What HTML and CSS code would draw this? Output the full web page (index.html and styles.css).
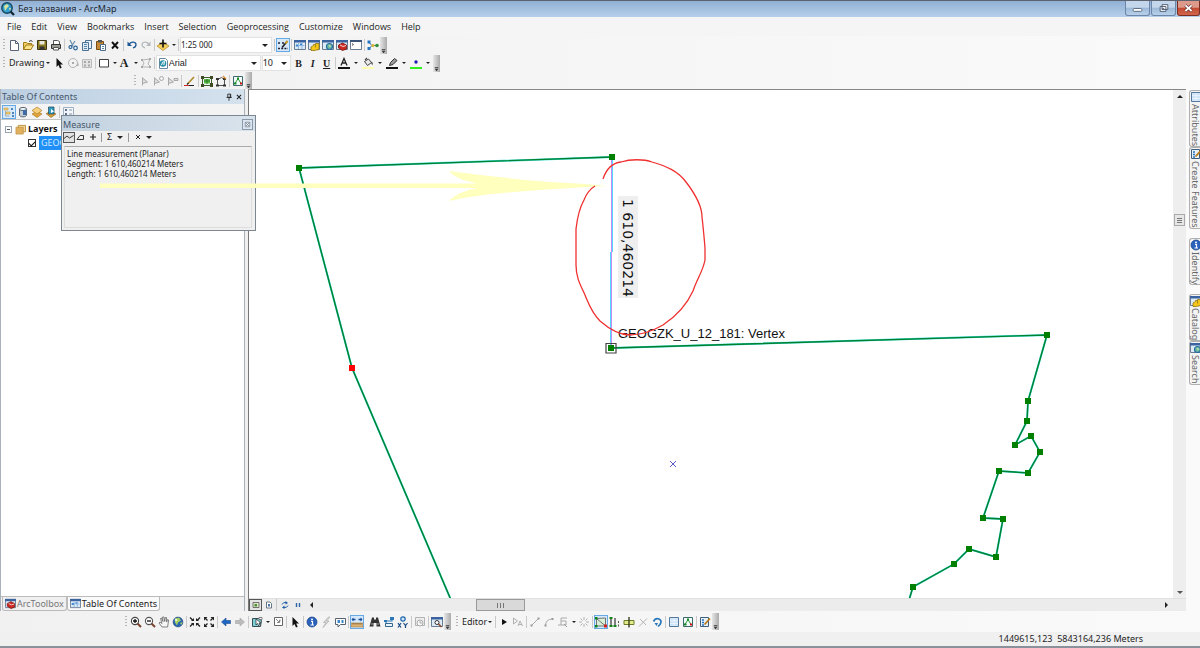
FILE: index.html
```html
<!DOCTYPE html>
<html lang="ru">
<head>
<meta charset="utf-8">
<title>Без названия - ArcMap</title>
<link rel="stylesheet" href="styles.css">
</head>
<body>
<svg class="defs" aria-hidden="true">
  <defs>
    <symbol id="app" viewBox="0 0 14 14"><circle cx="6" cy="6" r="5.2" fill="#2f9fd0" stroke="#17455e" stroke-width="1.4"/><path d="M3 4l3-2 2 2-2 2-2 3zM8 6l2 0-1 3z" fill="#d8e29a"/><path d="M9.5 9.5l3.5 3.5" stroke="#142a38" stroke-width="2.4"/></symbol>
    <symbol id="new" viewBox="0 0 12 12"><path d="M2.5 1.5h5l3 3v7h-8z" fill="#fff" stroke="#5a6577"/><path d="M7.5 1.5v3h3" fill="none" stroke="#5a6577"/></symbol>
    <symbol id="open" viewBox="0 0 12 12"><path d="M1.5 10.5v-7h3l1 1h4v2" fill="#f3cf62" stroke="#a07a16"/><path d="M1.5 10.5l2.500-4.500h7.500l-2.500 4.500z" fill="#fbe28a" stroke="#a07a16"/><path d="M7 2.500q2-2 3.500 0" fill="none" stroke="#333"/></symbol>
    <symbol id="save" viewBox="0 0 12 12"><path d="M1.500 1.500h9v9h-9z" fill="#8a7a22" stroke="#3d3512"/><path d="M3.500 2h5v3.500h-5z" fill="#e8e6d8"/><path d="M3.500 7.500h5v3h-5z" fill="#333"/></symbol>
    <symbol id="print" viewBox="0 0 12 12"><path d="M3.500 1.500h4l2 1v3h-6z" fill="#fff" stroke="#555"/><path d="M1.500 5.500h9v4h-9z" fill="#9a9a92" stroke="#333"/><path d="M3.500 8.500h5v2.500h-5z" fill="#fff" stroke="#555"/></symbol>
    <symbol id="cut" viewBox="0 0 12 12"><path d="M3 1l3 6M8 2l-4 6" stroke="#6f93ae" stroke-width="1.300"/><circle cx="3.500" cy="8" r="1.500" fill="none" stroke="#28639b" stroke-width="1.200"/><circle cx="8.500" cy="9" r="1.800" fill="none" stroke="#28639b" stroke-width="1.200"/></symbol>
    <symbol id="copy" viewBox="0 0 12 12"><path d="M4.500 1.500h6v8h-6z" fill="#eaf3fa" stroke="#4a7093"/><path d="M1.500 3.500h6v8h-6z" fill="#dcebf6" stroke="#4a7093"/><path d="M3 5.500h3M3 7.500h3M3 9.500h3" stroke="#5c86a8"/></symbol>
    <symbol id="paste" viewBox="0 0 12 12"><path d="M1.500 2.500h7v8h-7z" fill="#c58a35" stroke="#7a4b12"/><path d="M3 1h4v2.500h-4z" fill="#555"/><path d="M5.500 5.500h5v6h-5z" fill="#fff" stroke="#4b6c90"/><path d="M7 7.500h2M7 9.500h2" stroke="#5c86a8"/></symbol>
    <symbol id="del" viewBox="0 0 12 12"><path d="M3 3l6 6.500M9 3l-6 6.500" stroke="#111" stroke-width="1.900"/></symbol>
    <symbol id="undo" viewBox="0 0 12 12"><path d="M3 5c3-3 7-2 7 .8 0 1.600-1 2.600-3 3" fill="none" stroke="#1d5796" stroke-width="1.300"/><path d="M1.500 2.500v4.500h4.500z" fill="#1d5796"/></symbol>
    <symbol id="redo" viewBox="0 0 12 12"><path d="M9 5c-3-3-7-2-7 .8 0 1.600 1 2.600 3 3" fill="none" stroke="#b4b8bc" stroke-width="1.200"/><path d="M10.500 2.500v4.500h-4.500z" fill="#b4b8bc"/></symbol>
    <symbol id="add" viewBox="0 0 12 12"><path d="M6 3l6 4-6 4.500-6-4.500z" fill="#f5cf5c" stroke="#b3871c" stroke-width=".7"/><path d="M6 .500v8M2.500 4.500h7" stroke="#111" stroke-width="1.600"/></symbol>
    <symbol id="edtb" viewBox="0 0 12 12"><path d="M1 4h2M5 4h2M1 9.500h10" stroke="#223" stroke-width="1.300" stroke-dasharray="2 1.200"/><path d="M5 8.500l5.500-6.500" stroke="#222" stroke-width="1.700"/><path d="M8.500 4.500l2-2.500" stroke="#d9a520" stroke-width="1.700"/></symbol>
    <symbol id="win" viewBox="0 0 12 12"><path d="M.5 1.500h11v9h-11z" fill="#dceaf6" stroke="#6a7c92"/><path d="M0 1h12v2.500h-12z" fill="#3a63a0"/></symbol>
    <symbol id="toc" viewBox="0 0 12 12"><use href="#win"/><path d="M1.500 6.500h9M4.500 4v6M8 4v6" stroke="#8cb8e4"/><path d="M2 5.500h2v2h-2zM6 4.500h2v1.500h-2z" fill="#3c82cc"/></symbol>
    <symbol id="cat" viewBox="0 0 12 12"><use href="#win"/><path d="M3 8l2.500-1.500v-1h2v-1h3.500v6l-5 1h-3z" fill="#f3c81b" stroke="#94750c" stroke-width=".8"/><path d="M7.500 5.500v3" stroke="#94750c" stroke-width=".8"/></symbol>
    <symbol id="srch" viewBox="0 0 12 12"><use href="#win"/><circle cx="7.500" cy="7.500" r="3" fill="#6fb9a0" stroke="#276ea3" stroke-width="1.200"/><path d="M6.500 7l1.500-1 1 2z" fill="#e9f3b0"/></symbol>
    <symbol id="tbx" viewBox="0 0 12 12"><use href="#win"/><path d="M2.500 6l4-2 4 2v4l-4 1.500-4-2.500z" fill="#cb2a22" stroke="#7b120d" stroke-width=".8"/><path d="M4 6l3 1.500 3-1" fill="none" stroke="#fff" stroke-width=".8"/></symbol>
    <symbol id="py" viewBox="0 0 12 12"><path d="M.5 1.500h11v9h-11z" fill="#fff" stroke="#6a7c92"/><path d="M0 1h12v2h-12z" fill="#3d5479"/><path d="M2 4.500l1.500 1-1.500 1" fill="none" stroke="#333" stroke-width=".8"/></symbol>
    <symbol id="model" viewBox="0 0 12 12"><path d="M2 3.500l3 3-3 3M5 6.500h6" fill="none" stroke="#276ea3"/><path d="M.500 1.500h3v3h-3zM.500 8h3v3h-3z" fill="#2675c0"/><circle cx="6" cy="6.500" r="1.600" fill="#d9b52b"/><circle cx="10" cy="6.500" r="1.800" fill="#36913e"/></symbol>
    <symbol id="ptr" viewBox="0 0 12 12"><path d="M3.500 1v9l2-2 1.500 3.500 1.700-.8-1.500-3.200h2.800z" fill="#111"/></symbol>
    <symbol id="rot" viewBox="0 0 12 12"><circle cx="6" cy="6" r="4.500" fill="none" stroke="#b5b5b5"/><path d="M5 5h2v2h-2zM9 9l2.500 0v-3z" fill="#aaa"/></symbol>
    <symbol id="zsel" viewBox="0 0 12 12"><path d="M1.500 2.500h9v8h-9z" fill="#e3e3e3" stroke="#bbb"/><path d="M3 4h2v2h-2zM7 4h2v2h-2zM3 7.500h2v2h-2zM7 7.500h2v2h-2z" fill="#a8a8a8"/></symbol>
    <symbol id="rect" viewBox="0 0 12 12"><path d="M1.500 2.500h9v7.500h-9z" fill="#fff" stroke="#3f3f3f"/></symbol>
    <symbol id="verts" viewBox="0 0 12 12"><path d="M2 10l2-4-2-3 8-1-2 5 3 3z" fill="none" stroke="#b4b4b4"/><path d="M1 2h2v2h-2zM9 1h2v2h-2zM1 9h2v2h-2zM9 9h2v2h-2z" fill="#aaa"/></symbol>
    <symbol id="ttf" viewBox="0 0 12 12"><path d="M2.500 1.500h6l2 2v8h-8z" fill="#fff" stroke="#6a87a0"/><circle cx="6" cy="6.500" r="3.300" fill="#2c91a8"/><path d="M4.500 8q1-4 3-3.500l-.7 3.500" stroke="#fff" fill="none"/></symbol>
    <symbol id="fcol" viewBox="0 0 12 12"><path d="M3 8.500l3-7 3 7M4 6h4" fill="none" stroke="#222" stroke-width="1.300"/><path d="M0 10h12v2h-12z" fill="#111"/></symbol>
    <symbol id="fill" viewBox="0 0 12 12"><path d="M2.500 4.500l4-2.500 3 3.500-4 3z" fill="#e8e8e8" stroke="#444"/><path d="M3 3l2-2M9.500 5l1 2.500" stroke="#444" stroke-width="1.200"/><path d="M0 10h12v2h-12z" fill="#ffffb0"/></symbol>
    <symbol id="brush" viewBox="0 0 12 12"><path d="M3.500 8.500l1-3 4-4 2.500 2-4 4z" fill="#999" stroke="#333"/><path d="M0 10h12v2h-12z" fill="#111"/></symbol>
    <symbol id="dot" viewBox="0 0 12 12"><circle cx="6" cy="5" r="1.700" fill="#1d1dae"/><path d="M0 10h12v2h-12z" fill="#30f020"/></symbol>
    <symbol id="t1" viewBox="0 0 12 12"><path d="M3.500 2.500v8M3.500 3l5 4-5 1.500" fill="#ddd" stroke="#a9a9a9"/></symbol>
    <symbol id="t2" viewBox="0 0 12 12"><path d="M1.500 2.500v8M1.500 3l5 4-5 1.500" fill="#ddd" stroke="#a9a9a9"/><circle cx="8.500" cy="3.500" r="2" fill="none" stroke="#a9a9a9"/></symbol>
    <symbol id="t3" viewBox="0 0 12 12"><path d="M1.500 2.500v8M1.500 3l5 4-5 1.500M7 3.500h4v2h-4z" fill="#ddd" stroke="#a9a9a9"/></symbol>
    <symbol id="pen" viewBox="0 0 12 12"><path d="M4 8.500l6-6.500" stroke="#b08a25" stroke-width="1.600"/><path d="M3 9.500l1.500-1.500" stroke="#222" stroke-width="1.300"/><path d="M0 10.500h5" stroke="#c22"/><path d="M5 10.500h5" stroke="#222"/></symbol>
    <symbol id="g1" viewBox="0 0 12 12"><path d="M1.500 2.500h9v8h-9z" fill="none" stroke="#3b5e2c"/><path d="M3 4h6v4.500h-6z" fill="#5cc34a"/><path d="M0 1h3v3h-3zM9 1h3v3h-3zM0 9h3v3h-3zM9 8h3v4h-3z" fill="#3d4a22"/><path d="M6 4v5M3 6h6" stroke="#2f7a28"/></symbol>
    <symbol id="g2" viewBox="0 0 12 12"><path d="M2.500 10.500v-6l4-2 3 2v6z" fill="none" stroke="#555"/><path d="M1 3h3v2h-3zM8 3h3v2h-3zM1 9.500h3v2h-3zM8 9.500h3v2h-3z" fill="#333"/><path d="M8 1l3 3" stroke="#dc8b24" stroke-width="1.300"/></symbol>
    <symbol id="topo" viewBox="0 0 12 12"><path d="M1.500 1.500h9v9h-9z" fill="#f4fbfb" stroke="#3c6870"/><path d="M3 8.500l3-5 3 5" fill="none" stroke="#2b9b3b"/><path d="M5 2.500h2v2h-2z" fill="#148a22"/><path d="M2 7.500h2.500v2h-2.500z" fill="#148a22"/><path d="M8 7.500h2v2h-2z" fill="#d11"/></symbol>
    <symbol id="zin" viewBox="0 0 12 12"><circle cx="5" cy="5" r="3.600" fill="#fff" stroke="#444" stroke-width="1.100"/><path d="M3 5h4M5 3v4" stroke="#111" stroke-width="1.300"/><path d="M7.500 7.500l3.500 3.500" stroke="#7a4530" stroke-width="2"/></symbol>
    <symbol id="zout" viewBox="0 0 12 12"><circle cx="5" cy="5" r="3.600" fill="#fff" stroke="#555" stroke-width="1.100"/><path d="M3 5h4" stroke="#111" stroke-width="1.300"/><path d="M7.500 7.500l3.500 3.500" stroke="#7a4530" stroke-width="2"/></symbol>
    <symbol id="hand" viewBox="0 0 12 12"><path d="M4 11l-3-4 1-1 2 1.500-1.500-5 1-.5 1.500 3.500-.5-4.500h1.500l.7 4.500.6-4h1.200l.1 4.500 1-2.500 1 .5-1 7z" fill="#f6f6f6" stroke="#666" stroke-width=".8"/></symbol>
    <symbol id="globe" viewBox="0 0 12 12"><circle cx="6" cy="6" r="4.900" fill="#2b66b5" stroke="#1b4377" stroke-width=".6"/><path d="M3 2.500l4-1 2 3-3 2-1 3-2-3z" fill="#a2d060"/><path d="M8 7l2.500-1-1 3z" fill="#a2d060"/><circle cx="4" cy="4" r="1.300" fill="#e7f6c6"/></symbol>
    <symbol id="zfin" viewBox="0 0 12 12"><path d="M1 1.500l3 3M11 1.500l-3 3M1 10.500l3-3M11 10.500l-3-3" stroke="#222" stroke-width="1.300"/><path d="M2 5h3v-3zM10 5h-3v-3zM2 7h3v3zM10 7h-3v3z" fill="#222"/></symbol>
    <symbol id="zfout" viewBox="0 0 12 12"><path d="M2 2l2.500 2.500M10 2l-2.500 2.500M2 10l2.500-2.500M10 10l-2.500-2.500" stroke="#222" stroke-width="1.300"/><path d="M1 1h3.500l-3.500 3.500zM11 1h-3.500l3.500 3.500zM1 11h3.500l-3.500-3.500zM11 11h-3.500l3.500-3.500z" fill="#222"/></symbol>
    <symbol id="back" viewBox="0 0 12 12"><path d="M1.500 6l4.500-4v2.500h4.500v3h-4.500v2.500z" fill="#1f66c2" stroke="#164b91" stroke-width=".6"/></symbol>
    <symbol id="fwd" viewBox="0 0 12 12"><path d="M10.500 6l-4.500-4v2.500h-4.500v3h4.500v2.500z" fill="#bcbcbc" stroke="#a5a5a5" stroke-width=".6"/></symbol>
    <symbol id="sel" viewBox="0 0 12 12"><path d="M1.500 2.500h6l3 2-1 6h-8z" fill="#7fd0d8" stroke="#3a4d55"/><path d="M8 1.500h3v2h-3z" fill="#fff" stroke="#555" stroke-width=".7"/><path d="M5 3v6l1.500-1.500 1.500 3 1-1-1-2.500h2z" fill="#fff" stroke="#222" stroke-width=".7"/></symbol>
    <symbol id="clr" viewBox="0 0 12 12"><path d="M2.500 1.500h8v8h-8z" fill="#fff" stroke="#666"/><path d="M4 3l3.500 3.500M7.500 4v2.500h-2.500M8 3.500v2" fill="none" stroke="#888"/></symbol>
    <symbol id="info" viewBox="0 0 12 12"><circle cx="6" cy="6" r="5" fill="#2a62bd" stroke="#163f83" stroke-width=".7"/><circle cx="6" cy="3.500" r="1" fill="#fff"/><path d="M5 5.500h1.500v3.500M4.500 9h3.500" stroke="#fff" stroke-width="1.200" fill="none"/></symbol>
    <symbol id="bolt" viewBox="0 0 12 12"><path d="M8.500 1l-5 5.500h2.500l-3 5 6-6.500h-2.500l3.500-4z" fill="#ddd" stroke="#aaa" stroke-width=".7"/></symbol>
    <symbol id="html" viewBox="0 0 12 12"><path d="M1.500 2.500h10v6h-5l-2.500 2.500v-2.500h-2.500z" fill="#fff" stroke="#56626e"/><path d="M3.500 4h2.500v3h-2.500zM7.500 4h2v3h-2z" fill="#3a86c8"/></symbol>
    <symbol id="ruler" viewBox="0 0 12 12"><path d="M0 7h12v4h-12z" fill="#dcb377" stroke="#a57c3c" stroke-width=".6"/><path d="M2 7v1.500M4 7v1.500M6 7v1.500M8 7v1.500M10 7v1.500" stroke="#5f4317" stroke-width=".7"/><path d="M1 3.500h3.500M7.500 3.500h3.500" stroke="#1b4c9c" stroke-width="1.300"/><path d="M2.500 1.500v4l-2-2zM9.500 1.500v4l2-2z" fill="#1b4c9c"/></symbol>
    <symbol id="bino" viewBox="0 0 12 12"><path d="M3 1.500h2v2h2v-2h2l2.500 9h-4v-3.500h-3v3.500h-4z" fill="#333"/><path d="M2 8h2M8 8h2" stroke="#aaa"/></symbol>
    <symbol id="route" viewBox="0 0 12 12"><path d="M3 8v-3h6v-2" fill="none" stroke="#2b78b8" stroke-width="1.100"/><path d="M2.500 7.500h7v3h-7z" fill="#eaf4fb" stroke="#31688f"/><path d="M7 1h4v3h-4zM1 4h3v2h-3z" fill="#2b78b8"/></symbol>
    <symbol id="xy" viewBox="0 0 12 12"><circle cx="6" cy="3" r="2.200" fill="#cfe7f8" stroke="#1d64a8" stroke-width="1.200"/><path d="M1 7l3 4.500M4 7l-3 4.500M6.500 7l2 2.500 2-2.500M8.500 9.500v2.500" fill="none" stroke="#174c86" stroke-width="1.200"/></symbol>
    <symbol id="time" viewBox="0 0 12 12"><path d="M1.500 1.500h9v8h-9z" fill="#eee" stroke="#b3b3b3"/><circle cx="6" cy="7" r="3" fill="#f8f8f8" stroke="#aaa"/><path d="M6 5v2h2" fill="none" stroke="#aaa"/></symbol>
    <symbol id="view" viewBox="0 0 12 12"><use href="#win"/><circle cx="6" cy="6.500" r="2" fill="#fff" stroke="#333"/><path d="M7.500 8l3 3" stroke="#8a4a30" stroke-width="1.600"/></symbol>
    <symbol id="play" viewBox="0 0 12 12"><path d="M4 3v6l5-3z" fill="#111"/></symbol>
    <symbol id="ea" viewBox="0 0 12 12"><path d="M1.500 2v6l4-3zM6 10l2-5 2.500 5M7 8.500h3" fill="none" stroke="#b0b0b0"/></symbol>
    <symbol id="line" viewBox="0 0 12 12"><path d="M2.500 9.500l7-7" stroke="#aaa"/><path d="M1.500 8.500h2v2h-2zM8.500 1.500h2v2h-2z" fill="#999"/></symbol>
    <symbol id="arc" viewBox="0 0 12 12"><path d="M2.500 10q0-7 7-7" stroke="#aaa" fill="none"/><path d="M1.500 8.500h2v2h-2zM8.500 2h2v2h-2z" fill="#999"/></symbol>
    <symbol id="trace" viewBox="0 0 12 12"><path d="M4 2h6M4 2v7M1 9h8v-4h-5" stroke="#aaa" fill="none"/><path d="M7 8l3 3" stroke="#999"/></symbol>
    <symbol id="burst" viewBox="0 0 12 12"><path d="M6 1v3M6 8v3M1 6h3M8 6h3M2.500 2.500l2 2M7.500 7.500l2 2M9.500 2.500l-2 2M4.500 7.500l-2 2" stroke="#b2b2b2"/></symbol>
    <symbol id="ev" viewBox="0 0 12 12"><path d="M1.500 2v8h9l-9-7.500 9-.500v8" fill="#d8f0d8" stroke="#555" stroke-width=".8"/><path d="M0 1h2.500v2.500h-2.500zM0 9h2.500v2.500h-2.500z" fill="#12851c"/><path d="M9 8.500h3v3h-3z" fill="#c22"/></symbol>
    <symbol id="resh" viewBox="0 0 12 12"><path d="M2 2v8M6 2v8" stroke="#333" stroke-width="1.200"/><path d="M.500 1h3v2h-3zM.500 9h3v2h-3zM4.500 9h3v2h-3z" fill="#12851c"/><path d="M9.500 5v2M9.500 8.500v2" fill="none" stroke="#555"/></symbol>
    <symbol id="cutp" viewBox="0 0 12 12"><path d="M1 4.500h10v4h-10z" fill="#e4eb8c" stroke="#6b7d2a"/><path d="M6 1v10.500" stroke="#3a3f1c" stroke-width="1.400"/></symbol>
    <symbol id="split" viewBox="0 0 12 12"><path d="M2 10.500l8-8M3 3l6 6" stroke="#b5b5b5"/></symbol>
    <symbol id="rotb" viewBox="0 0 12 12"><path d="M2.500 5.500q2-4 5.500-2.500t1 5.500l-2 2" fill="none" stroke="#2677ba" stroke-width="1.700"/><path d="M3.500 7l3.500 0-1.500 3z" fill="#2677ba"/></symbol>
    <symbol id="attr" viewBox="0 0 12 12"><path d="M1.500 1.500h9v9h-9z" fill="#cfe5f8" stroke="#54799c"/><path d="M2 4.500h8M2 7.500h8M6 2v8" stroke="#f2f8fd" stroke-width=".7"/></symbol>
    <symbol id="crf" viewBox="0 0 12 12"><path d="M1.500 1.500h8v9h-8z" fill="#e9f1f8" stroke="#405f7c"/><path d="M3 4h2M3 6.500h2M3 9h2" stroke="#2675c0" stroke-width="1.500"/><path d="M5.500 8.500l5.500-6" stroke="#b87b1a" stroke-width="1.800"/></symbol>
    <symbol id="l1" viewBox="0 0 12 12"><path d="M1 2h4v2h-4zM3 6h4v2h-4z" fill="#f3cd78" stroke="#c99a3b" stroke-width=".6"/><path d="M8 3h2M9 7h2M9 10h2" stroke="#2766a5" stroke-width="1.500"/><path d="M2.500 5v5h4" stroke="#9a9a9a" fill="none" stroke-width=".7"/></symbol>
    <symbol id="l2" viewBox="0 0 12 12"><path d="M2.500 3v6c0 2.500 7 2.500 7 0v-6z" fill="#c5ccd4" stroke="#5b6875"/><ellipse cx="6" cy="3" rx="3.500" ry="1.600" fill="#eef2f6" stroke="#5b6875"/><path d="M6 4h3.500v5h-3.500z" fill="#3e6da7"/></symbol>
    <symbol id="l3" viewBox="0 0 12 12"><path d="M6 5l5 3-5 3.500-5-3.500z" fill="#e0a53a" stroke="#a6741b" stroke-width=".6"/><path d="M6 1l5 3.500-5 3.500-5-3.500z" fill="#f6cf7c" stroke="#a6741b" stroke-width=".6"/></symbol>
    <symbol id="l4" viewBox="0 0 12 12"><path d="M1 7.500l5-2 5 2.500-5 3.500z" fill="#d9a03d" stroke="#8c6214" stroke-width=".6"/><path d="M3.500 1h5.500v7h-5.500z" fill="#2f9cc0" stroke="#245" stroke-width=".7"/><path d="M6 3v4l3-1.500z" fill="#fff"/></symbol>
    <symbol id="l5" viewBox="0 0 12 12"><path d="M1.500 1.500h10v9h-10z" fill="#f2f5f9" stroke="#9fb0c4"/><path d="M3 4h2M3 8h2" stroke="#2b446d" stroke-width="1.600"/><path d="M7 4h3M7 8h3" stroke="#8799ad"/></symbol>
    <symbol id="layers" viewBox="0 0 12 12"><path d="M3.500 1.500h8v7h-8z" fill="#f3d798" stroke="#b98f40"/><path d="M1 3.500h8v7.500h-8z" fill="#e0b05e" stroke="#b98f40" stroke-width=".7"/></symbol>
    <symbol id="mline" viewBox="0 0 12 12"><path d="M1 7.500l3-2.500 2.500 2 4-2.500" fill="none" stroke="#222" stroke-width=".9"/></symbol>
    <symbol id="marea" viewBox="0 0 12 12"><path d="M2 8.500l3-4h3.500v4z" fill="none" stroke="#222" stroke-width=".9"/></symbol>
    <symbol id="mfeat" viewBox="0 0 12 12"><path d="M6 3v6M3 6h6" stroke="#222" stroke-width="1.200"/></symbol>
    <symbol id="mclr" viewBox="0 0 12 12"><path d="M4 4l4 4M8 4l-4 4" stroke="#222"/></symbol>
    <symbol id="pin" viewBox="0 0 12 12"><path d="M4.500 2.500h3.500v4h-3.500zM3 6.500h6.500M6 6.500v4M7.500 2.500v4" fill="none" stroke="#222"/></symbol>
    <symbol id="x" viewBox="0 0 12 12"><path d="M3.500 3.500l5 5M8.500 3.500l-5 5" stroke="#222" stroke-width="1.300"/></symbol>
    <symbol id="mx" viewBox="0 0 12 12"><path d="M3 3h6v6h-6z" fill="#eef3f8" stroke="#6f7d8c"/><path d="M4 4l4 4M8 4l-4 4" stroke="#6f7d8c"/></symbol>
    <symbol id="dv" viewBox="0 0 12 12"><path d="M3 3.500h6v5h-6z" fill="#dfe8c5" stroke="#555" stroke-width=".8"/><path d="M4.500 5h2.500v2.500h-2.500z" fill="#4d8a3a"/></symbol>
    <symbol id="lv" viewBox="0 0 12 12"><path d="M3.500 3h3.500l1.500 1.500v4.500h-5z" fill="#fff" stroke="#456" stroke-width=".8"/><path d="M5 5h2v2.500h-2z" fill="#4a78a8"/></symbol>
    <symbol id="ref" viewBox="0 0 12 12"><path d="M3 5.500q1-2.500 4-2M9 6.500q-1 2.500-4 2" fill="none" stroke="#1f5da5"/><path d="M6.500 2v3.500l2.500-1.500zM5.500 6.500v3.500l-2.500-1.500z" fill="#1f5da5"/></symbol>
    <symbol id="pause" viewBox="0 0 12 12"><path d="M4.500 4v4M7.500 4v4" stroke="#2f66a8" stroke-width="1.400"/></symbol>
    <symbol id="over" viewBox="0 0 8 12"><path d="M2 7.500h4" stroke="#111"/><path d="M2 9h4l-2 2z" fill="#111"/></symbol>
  </defs>
</svg>

<header class="titlebar">
  <svg class="appicon"><use href="#app"/></svg>
  <h1>Без названия - ArcMap</h1>
  <div class="winbtns">
    <button aria-label="Minimize"><svg viewBox="0 0 24 14"><rect x="7.500" y="7.500" width="9" height="3" rx="1" fill="#fff" stroke="#5a6a80"/></svg></button>
    <button aria-label="Restore"><svg viewBox="0 0 24 14"><path d="M10.500 3.500h6v5h-6zM8.500 5.500h6v5h-6z" fill="#fff" stroke="#4c5c72"/><path d="M10.500 7.500h2v1h-2z" fill="#8ea6c2" stroke="#4c5c72" stroke-width=".7"/></svg></button>
    <button class="close" aria-label="Close"><svg viewBox="0 0 24 14"><path d="M8.500 4l7 6.500M15.500 4l-7 6.500" stroke="#4d1c1c" stroke-width="3.400"/><path d="M8.500 4l7 6.500M15.500 4l-7 6.500" stroke="#fff" stroke-width="2.200"/></svg></button>
  </div>
</header>

<nav class="menubar">
  <button>File</button><button>Edit</button><button>View</button><button>Bookmarks</button><button>Insert</button><button>Selection</button><button>Geoprocessing</button><button>Customize</button><button>Windows</button><button>Help</button>
</nav>

<div class="bars">
  <div class="bar">
    <i class="grip"></i>
    <button aria-label="New"><svg><use href="#new"/></svg></button>
    <button aria-label="Open"><svg><use href="#open"/></svg></button>
    <button aria-label="Save"><svg><use href="#save"/></svg></button>
    <button aria-label="Print"><svg><use href="#print"/></svg></button>
    <i class="sep"></i>
    <button aria-label="Cut"><svg><use href="#cut"/></svg></button>
    <button aria-label="Copy"><svg><use href="#copy"/></svg></button>
    <button aria-label="Paste"><svg><use href="#paste"/></svg></button>
    <button aria-label="Delete"><svg><use href="#del"/></svg></button>
    <i class="sep"></i>
    <button aria-label="Undo"><svg><use href="#undo"/></svg></button>
    <button aria-label="Redo"><svg><use href="#redo"/></svg></button>
    <i class="sep"></i>
    <button class="drop" aria-label="Add data"><svg><use href="#add"/></svg></button>
    <i class="sep"></i>
    <span class="combo scale"><select aria-label="Map scale"><option>1:25 000</option></select></span>
    <i class="sep"></i>
    <button class="on" aria-label="Editor toolbar"><svg><use href="#edtb"/></svg></button>
    <i class="sep"></i>
    <button aria-label="Contents window"><svg><use href="#toc"/></svg></button>
    <button aria-label="Catalog window"><svg><use href="#cat"/></svg></button>
    <button aria-label="Search window"><svg><use href="#srch"/></svg></button>
    <button aria-label="Toolbox window"><svg><use href="#tbx"/></svg></button>
    <button aria-label="Python window"><svg><use href="#py"/></svg></button>
    <i class="sep"></i>
    <button aria-label="ModelBuilder"><svg><use href="#model"/></svg></button>
    <button class="more" aria-label="Toolbar options"><svg><use href="#over"/></svg></button>
  </div>
  <div class="bar">
    <i class="grip"></i>
    <button class="word">Drawing</button>
    <button aria-label="Select elements"><svg><use href="#ptr"/></svg></button>
    <button aria-label="Rotate"><svg><use href="#rot"/></svg></button>
    <button aria-label="Zoom to elements"><svg><use href="#zsel"/></svg></button>
    <i class="sep"></i>
    <button class="drop" aria-label="Rectangle"><svg><use href="#rect"/></svg></button>
    <button class="drop glyph">A</button>
    <button aria-label="Edit vertices"><svg><use href="#verts"/></svg></button>
    <i class="sep"></i>
    <span class="combo font"><svg><use href="#ttf"/></svg><select aria-label="Font"><option>Arial</option></select></span>
    <span class="combo size"><select aria-label="Font size"><option>10</option></select></span>
    <button class="glyph">B</button>
    <button class="glyph italic">I</button>
    <button class="glyph under">U</button>
    <i class="sep"></i>
    <button class="drop wide" aria-label="Font color"><svg><use href="#fcol"/></svg></button>
    <button class="drop wide" aria-label="Fill color"><svg><use href="#fill"/></svg></button>
    <button class="drop wide" aria-label="Line color"><svg><use href="#brush"/></svg></button>
    <button class="drop wide" aria-label="Marker color"><svg><use href="#dot"/></svg></button>
    <button class="more" aria-label="Toolbar options"><svg><use href="#over"/></svg></button>
  </div>
  <div class="bar inset">
    <i class="grip"></i>
    <button aria-label="Topology edit"><svg><use href="#t1"/></svg></button>
    <button aria-label="Topology select"><svg><use href="#t2"/></svg></button>
    <button aria-label="Topology modify"><svg><use href="#t3"/></svg></button>
    <i class="sep"></i>
    <button aria-label="Sketch"><svg><use href="#pen"/></svg></button>
    <i class="sep"></i>
    <button aria-label="Validate extent"><svg><use href="#g1"/></svg></button>
    <button aria-label="Fix errors"><svg><use href="#g2"/></svg></button>
    <i class="sep"></i>
    <button aria-label="Error inspector"><svg><use href="#topo"/></svg></button>
    <button class="more" aria-label="Toolbar options"><svg><use href="#over"/></svg></button>
  </div>
</div>

<main class="work">
  <aside class="contents">
    <div class="panelhead"><h2>Table Of Contents</h2>
      <button aria-label="Auto hide"><svg><use href="#pin"/></svg></button>
      <button aria-label="Close panel"><svg><use href="#x"/></svg></button>
    </div>
    <div class="paneltools">
      <button class="on" aria-label="List by drawing order"><svg><use href="#l1"/></svg></button>
      <button aria-label="List by source"><svg><use href="#l2"/></svg></button>
      <button aria-label="List by visibility"><svg><use href="#l3"/></svg></button>
      <button aria-label="List by selection"><svg><use href="#l4"/></svg></button>
      <i class="sep"></i>
      <button aria-label="Options"><svg><use href="#l5"/></svg></button>
    </div>
    <div class="tree">
      <div class="node root"><button class="twisty" aria-label="Collapse"></button><svg><use href="#layers"/></svg><b>Layers</b></div>
      <div class="node leaf"><input type="checkbox" id="lyr" checked><label for="lyr">GEOG</label></div>
    </div>
    <div class="tabs">
      <button><svg><use href="#tbx"/></svg>ArcToolbox</button>
      <button class="cur"><svg><use href="#toc"/></svg>Table Of Contents</button>
    </div>
  </aside>

  <section class="mapview">
    <div class="maprow">
      <svg class="map" role="img" aria-label="Map">
        <defs>
          <marker id="v" markerWidth="6" markerHeight="6" refX="3" refY="3" markerUnits="userSpaceOnUse"><rect width="6" height="6" fill="#008000"/></marker>
        </defs>
        <g transform="translate(-249 -90)" fill="none">
          <path d="M612 157L299 168L352 368L451 600M611 348L1047 335L1028 401L1027 421L1015 445L1031 436L1040 452L1028 473L999 471L983 518L1003 519L996 557L969 549L954 564L913 587L909 600" stroke="#3fe0dc" stroke-width="2"/>
          <path d="M612 157L299 168L352 368L451 600" stroke="#008030" stroke-width="1.400"/>
          <path d="M611 348L1047 335L1028 401L1027 421L1015 445L1031 436L1040 452L1028 473L999 471L983 518L1003 519L996 557L969 549L954 564L913 587L909 600" stroke="#008030" stroke-width="1.400" marker-mid="url(#v)"/>
          <path d="M612.500 157v95M610.500 252v96" stroke="#52d8ff" stroke-width="1"/>
          <path d="M611.500 157v191" stroke="#c58cf5"/>
          <path d="M296 165h6v6h-6zM609 154h6v6h-6zM608 345h6v6h-6z" fill="#008000"/>
          <path d="M349 365h6v6h-6z" fill="#f00"/>
          <path d="M606 343.500h10v9.500h-10z" stroke="#444" stroke-width="1.200"/>
          <path d="M670 461l6 6M676 461l-6 6" stroke="#5a5ac8"/>
          <rect x="618" y="196" width="20" height="102" fill="#efefef"/>
          <text class="dist" transform="translate(623 199) rotate(90)">1 610,460214</text>
          <text class="tip" x="618" y="338">GEOGZK_U_12_181: Vertex</text>
        </g>
      </svg>
      <div class="vscroll"><i class="up"></i><i class="thumb"></i><i class="down"></i></div>
    </div>
    <div class="hscroll">
      <button class="on" aria-label="Data view"><svg><use href="#dv"/></svg></button>
      <button aria-label="Layout view"><svg><use href="#lv"/></svg></button>
      <i class="sep"></i>
      <button aria-label="Refresh"><svg><use href="#ref"/></svg></button>
      <button aria-label="Pause drawing"><svg><use href="#pause"/></svg></button>
      <i class="left"></i><span class="track before"></span><i class="thumb"></i><span class="track"></span><i class="right"></i>
    </div>
  </section>

  <nav class="dock">
    <button><svg><use href="#attr"/></svg>Attributes</button>
    <button class="gap"><svg><use href="#crf"/></svg>Create Features</button>
    <button class="gap"><svg><use href="#info"/></svg>Identify</button>
    <button><svg><use href="#cat"/></svg>Catalog</button>
    <button><svg><use href="#srch"/></svg>Search</button>
  </nav>

  <section class="measure" aria-label="Measure">
    <header><h2>Measure</h2><button aria-label="Close measure"><svg><use href="#mx"/></svg></button></header>
    <div class="mtools">
      <button class="on" aria-label="Measure line"><svg><use href="#mline"/></svg></button>
      <button aria-label="Measure area"><svg><use href="#marea"/></svg></button>
      <button aria-label="Measure feature"><svg><use href="#mfeat"/></svg></button>
      <i class="sep"></i>
      <button class="drop glyph">Σ</button>
      <i class="sep"></i>
      <button class="drop" aria-label="Units"><svg><use href="#mclr"/></svg></button>
    </div>
    <div class="result"><p>Line measurement (Planar)</p><p>Segment: 1 610,460214 Meters</p><p>Length: 1 610,460214 Meters</p></div>
  </section>

  <svg class="notes" aria-hidden="true">
    <g transform="translate(0 -89)">
      <path d="M100 183.500H477Q455 179 449 171Q500 178 550 182Q590 184 606 186Q570 188 540 190Q480 194 449 201Q457 192 477 188H100z" fill="#ffffbe"/>
      <path d="M603 179C606 170 612 163 621 162C630 159 644 159 652 162C666 166 678 171 686 182C696 195 702 207 702 217C703 226 704 235 705 248V260C703 271 697 279 693 291C688 302 678 315 663 325C650 332 643 334 630 335C618 335 608 328 600 321C591 312 588 302 585 295C581 286 576 278 576 265V229C577 220 579 209 584 200C587 192 590 189 595 186" fill="none" stroke="#f03030" stroke-width="1.300"/>
    </g>
  </svg>
</main>

<div class="bar foot">
  <i class="grip"></i>
  <button aria-label="Zoom in"><svg><use href="#zin"/></svg></button>
  <button aria-label="Zoom out"><svg><use href="#zout"/></svg></button>
  <button aria-label="Pan"><svg><use href="#hand"/></svg></button>
  <button aria-label="Full extent"><svg><use href="#globe"/></svg></button>
  <i class="sep"></i>
  <button aria-label="Fixed zoom in"><svg><use href="#zfin"/></svg></button>
  <button aria-label="Fixed zoom out"><svg><use href="#zfout"/></svg></button>
  <i class="sep"></i>
  <button aria-label="Previous extent"><svg><use href="#back"/></svg></button>
  <button aria-label="Next extent"><svg><use href="#fwd"/></svg></button>
  <i class="sep"></i>
  <button class="drop" aria-label="Select features"><svg><use href="#sel"/></svg></button>
  <button aria-label="Clear selection"><svg><use href="#clr"/></svg></button>
  <i class="sep"></i>
  <button aria-label="Select elements"><svg><use href="#ptr"/></svg></button>
  <i class="sep"></i>
  <button aria-label="Identify"><svg><use href="#info"/></svg></button>
  <button aria-label="Hyperlink"><svg><use href="#bolt"/></svg></button>
  <button aria-label="HTML popup"><svg><use href="#html"/></svg></button>
  <i class="sep"></i>
  <button class="on" aria-label="Measure"><svg><use href="#ruler"/></svg></button>
  <i class="space"></i>
  <button aria-label="Find"><svg><use href="#bino"/></svg></button>
  <button aria-label="Find route"><svg><use href="#route"/></svg></button>
  <button aria-label="Go to XY"><svg><use href="#xy"/></svg></button>
  <i class="sep"></i>
  <button aria-label="Time slider"><svg><use href="#time"/></svg></button>
  <i class="sep"></i>
  <button aria-label="Viewer window"><svg><use href="#view"/></svg></button>
  <button class="more" aria-label="Toolbar options"><svg><use href="#over"/></svg></button>
  <i class="grip second"></i>
  <button class="word">Editor</button>
  <i class="sep"></i>
  <button aria-label="Edit tool"><svg><use href="#play"/></svg></button>
  <button aria-label="Edit annotation"><svg><use href="#ea"/></svg></button>
  <i class="sep"></i>
  <button aria-label="Straight segment"><svg><use href="#line"/></svg></button>
  <button aria-label="Arc segment"><svg><use href="#arc"/></svg></button>
  <button class="drop" aria-label="Trace"><svg><use href="#trace"/></svg></button>
  <button aria-label="Point"><svg><use href="#burst"/></svg></button>
  <i class="sep"></i>
  <button class="on" aria-label="Edit vertices"><svg><use href="#ev"/></svg></button>
  <button aria-label="Reshape"><svg><use href="#resh"/></svg></button>
  <button aria-label="Cut polygons"><svg><use href="#cutp"/></svg></button>
  <button aria-label="Split"><svg><use href="#split"/></svg></button>
  <button aria-label="Rotate"><svg><use href="#rotb"/></svg></button>
  <i class="sep"></i>
  <button aria-label="Attributes"><svg><use href="#attr"/></svg></button>
  <button aria-label="Sketch properties"><svg><use href="#topo"/></svg></button>
  <i class="sep"></i>
  <button aria-label="Create features"><svg><use href="#crf"/></svg></button>
  <button class="more" aria-label="Toolbar options"><svg><use href="#over"/></svg></button>
</div>
<footer class="status">1449615,123&nbsp; 5843164,236 Meters</footer>
</body>
</html>
```
FILE: styles.css
```css
* { box-sizing: border-box; }
body {
  margin: 0; height: 100vh; overflow: hidden;
  display: flex; flex-direction: column;
  background: #f0f0f0; color: #1e1e1e;
  font: 9px/12px "Noto Sans", "Open Sans", sans-serif;
}
button { border: 0; padding: 0; margin: 0; background: none; font: inherit; color: inherit; }
h1, h2, p { margin: 0; font: inherit; }
.defs { position: absolute; width: 0; height: 0; }

.titlebar {
  height: 17px; flex: none; display: flex; align-items: center; padding-left: 1px; gap: 3px;
  border-top: 1px solid #5c636e;
  background: linear-gradient(#90b0d4, #b6d0ea);
  color: #1c2733;
}
.titlebar h1 { flex: 1; }
.appicon { width: 14px; height: 14px; }
.winbtns { display: flex; gap: 1px; align-self: flex-start; }
.winbtns button {
  width: 25px; height: 15px; border: 1px solid #6b86a8; border-top: 0; border-radius: 0 0 3px 3px;
  background: linear-gradient(#c3d6ec 45%, #9db9d8 50%, #b8d0ea);
}
.winbtns .close { width: 23px; border-color: #7c2d22; background: linear-gradient(#dd9a8b 45%, #c24a32 50%, #d0664c); }
.winbtns svg { display: block; width: 100%; height: 14px; }

.menubar { flex: none; display: flex; gap: 10px; height: 19px; padding-left: 7px; background: #f5f5f5; align-items: center; font-family: "Open Sans", sans-serif; }

.bars { flex: none; height: 53px; background: linear-gradient(90deg, #f1f1f1, #fafafa); }
.bar { display: flex; align-items: center; height: 18px; padding-left: 3px; }
.bar svg, .paneltools svg, .mtools svg, .hscroll svg { width: 12px; height: 12px; display: block; flex: none; }
.bar button, .paneltools button, .mtools button, .hscroll button {
  width: 14px; height: 14px; flex: none; display: flex; align-items: center; justify-content: center;
}
.bars .inset { margin-left: 131px; height: 17px; }
.grip { width: 2px; height: 12px; margin-right: 2px; flex: none; background: repeating-linear-gradient(#b5b5b5 0 1px, transparent 1px 3px); }
.sep { width: 1px; height: 12px; margin: 0 1px; flex: none; background: #c9c9c9; }
.space { width: 4px; }
.bar .on, .paneltools .on { border: 1px solid #67a9e4; background: #d5e9fb; }
.bar .drop, .mtools .drop { width: 21px; justify-content: flex-start; gap: 3px; padding-left: 1px; }
.bar .wide { width: 24px; gap: 4px; }
.drop::after, .word::after, .combo::after {
  content: ""; border: solid transparent; border-width: 2px 2px 0; border-top-color: #222; flex: none;
}
.bar .word { width: auto; gap: 1px; padding: 0 2px; }
.bar .glyph { font: bold 10px "Liberation Serif", serif; }
.bar .drop.glyph { font-size: 12px; gap: 6px; padding-left: 2px; }
.bar .glyph.italic { font-style: italic; }
.bar .glyph.under { text-decoration: underline; }
.bar .more { width: 7px; height: 17px; align-items: flex-end; background: linear-gradient(90deg, #e6e6e6, #aaa); }
.bar .more svg { width: 7px; height: 11px; }
.combo { display: flex; align-items: center; height: 16px; background: #fff; border: 1px solid #e2e2e2; padding-right: 3px; margin-right: 1px; }
.combo::after { border-width: 3px 3px 0; }
.combo select { appearance: none; border: 0; padding: 0; background: none; font: 9px/12px "Noto Sans", sans-serif; color: #222; flex: 1; min-width: 0; }
.scale { width: 92px; }
.scale select { font-size: 8px; }
.font { width: 105px; }
.size { width: 29px; margin-right: 1px; }
.font select { font-family: "Liberation Sans", sans-serif; }

.work { flex: 1; min-height: 0; display: flex; position: relative; }
.contents { width: 245px; flex: none; display: flex; flex-direction: column; border-right: 1px solid #a9b1ba; border-left: 1px solid #a9b1ba; }
.panelhead { display: flex; align-items: center; height: 15px; flex: none; background: linear-gradient(90deg, #bccfe2, #d5e2ee); color: #46586c; padding-left: 1px; }
.panelhead h2 { flex: 1; }
.panelhead button { width: 10px; height: 10px; }
.panelhead svg { width: 10px; height: 10px; display: block; }
.paneltools { display: flex; align-items: center; height: 16px; flex: none; padding-left: 1px; background: #f3f3f3; border-bottom: 1px solid #c5c5c5; }
.tree { flex: 1; background: #fff; padding-top: 2px; }
.node { display: flex; align-items: center; height: 14px; overflow: hidden; }
.node svg { width: 11px; height: 11px; margin-right: 2px; }
.root { padding-left: 4px; }
.root b { color: #111; }
.twisty { width: 7px; height: 7px; border: 1px solid #9aa5b2; margin-right: 3px; background: linear-gradient(#4a5a72, #4a5a72) center / 3px 1px no-repeat #fff; }
.leaf { padding-left: 27px; }
.leaf input { appearance: none; width: 8px; height: 8px; margin: 0 3px 0 0; border: 1px solid #333; background: #fff; display: grid; place-items: center; flex: none; }
.leaf input:checked::before { content: ""; width: 5px; height: 3px; border: solid #111; border-width: 0 0 1px 1px; transform: rotate(-45deg); }
.leaf label { background: #2090f8; color: #cfe8ff; line-height: 14px; padding: 0 2px; }
.tabs { display: flex; height: 15px; flex: none; border-top: 1px solid #bbb; padding-left: 1px; }
.tabs button { display: flex; align-items: center; gap: 1px; padding: 0 2px; border: 1px solid #bbb; border-top: 0; border-radius: 0 0 3px 3px; color: #777; background: #f0f0f0; }
.tabs .cur { color: #222; background: #fafafa; }
.tabs svg { width: 11px; height: 11px; }

.mapview { flex: 1; min-width: 0; margin-left: 3px; display: flex; flex-direction: column; border-left: 1px solid #777; border-top: 1px solid #888; }
.maprow { flex: 1; min-height: 0; display: flex; background: #fff; }
.map { flex: 1; min-width: 0; height: 100%; display: block; }
.dist { font: 14px "DejaVu Sans", sans-serif; fill: #111; }
.tip { font: 13px "Liberation Sans", Arial, sans-serif; fill: #111; }
.vscroll { width: 13px; flex: none; background: #eee; display: flex; flex-direction: column; align-items: center; padding: 5px 0 4px; }
.vscroll i, .hscroll .left, .hscroll .right { border: 3px solid transparent; }
.vscroll .up { border-width: 0 3px 3px; border-bottom-color: #222; }
.vscroll .down { border-width: 3px 3px 0; border-top-color: #555; margin-top: auto; }
.vscroll .thumb { width: 11px; height: 12px; margin-top: 116px; border: 1px solid #aaa; background: repeating-linear-gradient(#777 0 1px, transparent 1px 2px) center / 5px 5px no-repeat #e6e6e6; }
.hscroll { height: 13px; flex: none; display: flex; align-items: center; background: #ececec; border-top: 1px solid #e0e0e0; }
.hscroll button { width: 13px; height: 12px; }
.hscroll .on { border: 1px solid #555; background: #e4e4e4; }
.hscroll .left { border-width: 3px 3px 3px 0; border-right-color: #222; margin-left: 6px; }
.hscroll .right { border-width: 3px 0 3px 3px; border-left-color: #222; margin-right: 18px; }
.hscroll .track { flex: 640; }
.hscroll .before { flex: 163; }
.hscroll .thumb { width: 49px; height: 12px; border: 1px solid #999; background: repeating-linear-gradient(90deg, #777 0 1px, transparent 1px 3px) center / 7px 5px no-repeat #d9d9d9; }

.dock { width: 14px; flex: none; padding-left: 3px; overflow: hidden; background: #fafafa; display: flex; flex-direction: column; }
.dock button { writing-mode: vertical-rl; width: 11px; display: flex; align-items: flex-end; gap: 1px; padding: 0; line-height: 10px; border: 1px solid #b0b0b0; border-right: 0; border-radius: 3px 0 0 3px; color: #666; background: #f4f4f4; flex: none; }
.dock svg { width: 12px; height: 12px; flex: none; }
.dock .gap { margin-bottom: 9px; }
.dock button:first-child { margin-top: 1px; }

.measure { position: absolute; left: 61px; top: 26px; width: 195px; height: 116px; border: 1px solid #7d8791; background: #f0f0f0; display: flex; flex-direction: column; }
.measure header { display: flex; align-items: center; justify-content: space-between; height: 15px; flex: none; padding: 2px 2px 0 1px; background: linear-gradient(90deg, #c3d2e0, #d9e3ec); color: #44566a; }
.measure header button { width: 11px; height: 11px; border: 1px solid #8b9aab; background: #dbe6f0; }
.measure header svg { display: block; width: 9px; height: 9px; }
.mtools { display: flex; align-items: center; height: 12px; padding-left: 1px; flex: none; }
.mtools button { width: 12px; height: 11px; }
.mtools .drop { width: 22px; gap: 2px; }
.mtools .glyph { gap: 5px; padding-left: 3px; }
.mtools .drop::after { border-width: 3px 3px 0; }
.mtools .on { border: 1px solid #555; background: #e2e2e2; }
.mtools .sep { margin: 0 2px; height: 9px; background: #999; }
.result { flex: 1; margin: 3px 3px 2px 2px; padding: 2px; border: 1px solid #ddd; border-top-color: #aaa; font: 8px/10px "Noto Sans", sans-serif; }
.notes { position: absolute; left: 0; top: 0; width: 100%; height: 100%; pointer-events: none; }

.foot { flex: none; height: 21px; padding-left: 125px; background: linear-gradient(90deg, #f1f1f1, #fafafa); }
.foot .second { margin-left: 5px; }
.status { flex: none; height: 16px; padding: 1px 57px 0 0; text-align: right; border-bottom: 2px solid #8b919b; }
```
